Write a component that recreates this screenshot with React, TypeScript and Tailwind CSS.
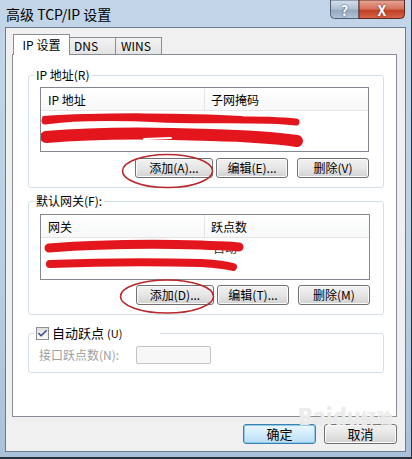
import { Check } from "lucide-react";

const btn =
  "h-[20px] rounded-[3px] border border-[#707070] bg-linear-to-b from-[#f2f2f2] via-[#e6e6e6] to-[#d2d2d2] text-[12px] text-black flex items-center justify-center shadow-[inset_0_0_0_1px_#fcfcfc]";

const Btn = ({ label, w }: { label: string; w: string }) => (
  <div className={`${btn} ${w}`}>{label}</div>
);

const ListBox = ({
  cols,
  h,
  children,
}: {
  cols: [string, string];
  h: string;
  children?: React.ReactNode;
}) => (
  <div className={`relative ${h} border border-[#828790] bg-white`}>
    <div className="flex h-[23px] border-b border-[#e5e5e5] bg-linear-to-b from-white to-[#f7f8f9] text-[12px] text-black">
      <div className="w-[164px] border-r border-[#e5e5e5] pl-[7px] leading-[23px]">{cols[0]}</div>
      <div className="flex-1 pl-[6px] leading-[23px]">{cols[1]}</div>
    </div>
    {children}
  </div>
);

const Group = ({
  label,
  h,
  mt,
  children,
}: {
  label: React.ReactNode;
  h: string;
  mt: string;
  children: React.ReactNode;
}) => (
  <div className={`relative ${h} ${mt} rounded-[3px] border border-[#d5dfe5]`}>
    <div className="absolute -top-[9px] left-[5px] bg-white px-[2px] text-[12px] leading-[16px] text-black">
      {label}
    </div>
    {children}
  </div>
);

// caption buttons (help + close), drawn as an svg with the glyphs on top
const CaptionButtons = () => (
  <div className="relative mr-[1px] h-[19px] w-[75px]">
    <svg className="absolute left-0 top-0" width="75" height="19">
      <defs>
        <linearGradient id="help" x1="0" y1="0" x2="0" y2="1">
          <stop offset="0" stopColor="#d6e1ed" />
          <stop offset="0.5" stopColor="#aebfd2" />
          <stop offset="0.55" stopColor="#93a7bf" />
          <stop offset="1" stopColor="#b3c5d9" />
        </linearGradient>
        <linearGradient id="close" x1="0" y1="0" x2="0" y2="1">
          <stop offset="0" stopColor="#e9a999" />
          <stop offset="0.5" stopColor="#d46e58" />
          <stop offset="0.55" stopColor="#c13e25" />
          <stop offset="1" stopColor="#d5654a" />
        </linearGradient>
      </defs>
      <path d="M0.5 0 V14.5 Q0.5 18.5 4.5 18.5 H29 V0 Z" fill="url(#help)" stroke="#4f5f74" />
      <path d="M29 0 V18.5 H70.5 Q74.5 18.5 74.5 14.5 V0 Z" fill="url(#close)" stroke="#5a2a22" />
    </svg>
    <div className="relative flex h-[19px] text-[14px] font-bold leading-none text-white">
      <span className="flex w-[29px] items-center justify-center [text-shadow:0_0_2px_#2b3b50]">?</span>
      <span className="flex w-[46px] items-center justify-center [text-shadow:0_0_2px_#5a1a10]">X</span>
    </div>
  </div>
);

export default function App() {
  return (
    <div className="relative h-[459px] w-[412px] overflow-hidden bg-[#2b3038] font-['Noto_Sans_CJK_SC',sans-serif]">
      {/* window frame */}
      <div className="flex h-[457px] w-[411px] flex-col bg-[#b9cfe4] bg-linear-to-b from-[#c3d6e9] via-[#bcd1e5] to-[#a9c2da] px-[5px] pb-[5px]">
        {/* title bar */}
        <div className="flex h-[27px] items-start justify-between">
          <div className="pl-[1px] pt-[4px] text-[14px] leading-[20px] text-black">高级 TCP/IP 设置</div>
          <CaptionButtons />
        </div>

        {/* client area */}
        <div className="flex flex-1 flex-col border border-[#6d7c8c] bg-[#f0f0f0] pl-[6px] pr-[8px] pt-[6px]">
          {/* tabs */}
          <div className="relative z-10 flex h-[20px] items-end pl-[1px] text-[12px]">
            <div className="-mb-[1px] flex h-[21px] w-[57px] items-center justify-center border border-b-0 border-[#898c95] bg-white">
              IP 设置
            </div>
            <div className="flex h-[17px] w-[46px] items-center border border-l-0 border-b-0 border-[#898c95] bg-linear-to-b from-[#f3f3f3] to-[#e3e3e3] pl-[4px]">
              DNS
            </div>
            <div className="flex h-[17px] w-[46px] items-center border border-l-0 border-b-0 border-[#898c95] bg-linear-to-b from-[#f3f3f3] to-[#e3e3e3] pl-[5px]">
              WINS
            </div>
          </div>

          {/* tab panel */}
          <div className="h-[363px] border border-[#898c95] bg-white pl-[15px] pr-[12px] pt-[20px]">
            <Group label="IP 地址(R)" h="h-[113px]" mt="mt-0">
              <div className="pl-[11px] pr-[14px] pt-[11px]">
                <ListBox cols={["IP 地址", "子网掩码"]} h="h-[65px]">
                  <svg className="absolute left-0 top-0" width="330" height="64">
                    <path d="M4 33 C40 28 80 29 120 31 C170 33 220 30 255 34" stroke="#e3161d" strokeWidth="7" fill="none" strokeLinecap="round" />
                    <path d="M3 30 C60 26 150 27 200 30" stroke="#e3161d" strokeWidth="4" fill="none" strokeLinecap="round" />
                    <path d="M5 49 C60 44 120 45 170 47 C210 48 235 50 256 53" stroke="#e3161d" strokeWidth="12" fill="none" strokeLinecap="round" />
                    <path d="M103 51 L130 50" stroke="#ffffff" strokeWidth="2" strokeLinecap="round" />
                  </svg>
                </ListBox>
                <div className="mt-[6px] flex justify-end">
                  <Btn label="添加(A)..." w="w-[78px]" />
                  <Btn label="编辑(E)..." w="ml-[3px] w-[72px]" />
                  <Btn label="删除(V)" w="ml-[9px] w-[72px]" />
                </div>
              </div>
            </Group>

            <Group label="默认网关(F):" h="h-[114px]" mt="mt-[13px]">
              <div className="pl-[11px] pr-[13px] pt-[12px]">
                <ListBox cols={["网关", "跃点数"]} h="h-[66px]">
                  <span className="absolute left-[172px] top-[24px] text-[12px] text-[#333]">自动</span>
                  <svg className="absolute left-0 top-0" width="330" height="64">
                    <path d="M8 33 C60 29 120 29 160 30 C180 31 190 31 198 32" stroke="#e3161d" strokeWidth="9" fill="none" strokeLinecap="round" />
                    <path d="M9 49 C60 47 120 47 160 48 C175 49 185 50 192 52" stroke="#e3161d" strokeWidth="8" fill="none" strokeLinecap="round" />
                  </svg>
                </ListBox>
                <div className="mt-[5px] flex justify-end">
                  <Btn label="添加(D)..." w="w-[78px]" />
                  <Btn label="编辑(T)..." w="ml-[3px] w-[72px]" />
                  <Btn label="删除(M)" w="ml-[9px] w-[72px]" />
                </div>
              </div>
            </Group>

            <Group
              label={
                <span className="flex items-center gap-[3px] pr-[36px] text-[13px]">
                  <span className="flex h-[13px] w-[13px] items-center justify-center border border-[#8f8f8f] bg-linear-to-b from-[#dedede] to-[#fbfbfb]">
                    <Check size={11} strokeWidth={3.5} color="#3b4f8c" />
                  </span>
                  自动跃点<span className="text-[11px]">(U)</span>
                </span>
              }
              h="h-[40px]"
              mt="mt-[18px]"
            >
              <div className="flex items-center pl-[10px] pt-[12px] text-[12px] text-[#a0a0a0]">
                <span className="w-[97px]">接口跃点数(N):</span>
                <div className="h-[18px] w-[75px] rounded-[2px] border border-[#c4c4c4] bg-[#f7f7f7]" />
              </div>
            </Group>
          </div>

          {/* bottom buttons */}
          <div className="mt-[7px] flex justify-end">
            <div className="flex h-[20px] w-[73px] items-center justify-center rounded-[3px] border border-[#3c7fb1] bg-linear-to-b from-[#eaf6fd] via-[#d3ecfa] to-[#b8def4] text-[13px] shadow-[inset_0_0_0_1px_#8ecae8]">
              确定
            </div>
            <div className={`${btn} ml-[8px] w-[73px] text-[13px]`}>取消</div>
          </div>
        </div>
      </div>

      {/* faint watermark */}
      <div className="pointer-events-none absolute left-[298px] top-[404px] text-[22px] font-bold leading-none text-white/60 [text-shadow:0_0_1px_#cfcfcf]">
        Baidu<span className="text-[16px]">经验</span>
      </div>

      {/* red annotation circles */}
      <svg className="pointer-events-none absolute left-0 top-0" width="412" height="459">
        <ellipse cx="167.5" cy="171" rx="45" ry="16.5" stroke="#b8262b" strokeWidth="1.6" fill="none" />
        <ellipse cx="167" cy="296.5" rx="46.5" ry="16.5" stroke="#b8262b" strokeWidth="1.6" fill="none" />
      </svg>
    </div>
  );
}
